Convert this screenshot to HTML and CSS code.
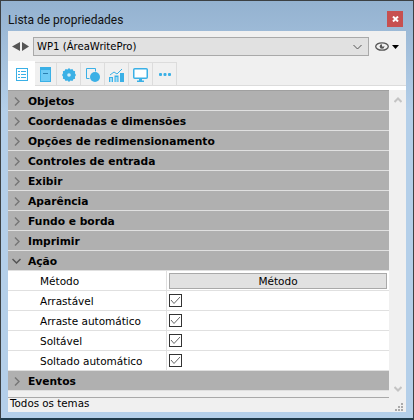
FILE: index.html
```html
<!DOCTYPE html>
<html lang="pt">
<head>
    <meta charset="UTF-8">
    <meta name="viewport" content="width=device-width, initial-scale=1.0">
    <title>Lista de propriedades</title>
    <link rel="stylesheet" href="styles.css">
</head>
<body>
    <div class="window">
        <header class="titlebar">
            <span class="title">Lista de propriedades</span>
            <button class="close">
                <svg width="7" height="6" viewBox="0 0 7 6"><path d="M1 .5l5 5M6 .5l-5 5" stroke="#fff" stroke-width="2"/></svg>
            </button>
        </header>

        <div class="panel">
            <div class="toolbar">
                <div class="arrows">
                    <svg width="8" height="9" viewBox="0 0 8 9"><path d="M8 0v9L0 4.500z" fill="#555"/></svg>
                    <svg width="7" height="9" viewBox="0 0 7 9"><path d="M0 0v9l7-4.500z" fill="#555"/></svg>
                </div>
                <div class="select">
                    <span>WP1 (ÁreaWritePro)</span>
                    <svg width="9" height="6" viewBox="0 0 9 6"><path d="M.5 1l4 4 4-4" fill="none" stroke="#555" stroke-width="1"/></svg>
                </div>
                <div class="eye">
                    <svg width="14" height="9" viewBox="0 0 14 9"><ellipse cx="7" cy="4.500" rx="6.300" ry="3.700" fill="none" stroke="#555" stroke-width="1.300"/><circle cx="7" cy="4.500" r="2.300" fill="#555"/><path d="M7 2h2v2.500H7z" fill="#eee"/></svg>
                    <svg width="7" height="4" viewBox="0 0 7 4"><path d="M0 0h7L3.500 4z" fill="#000"/></svg>
                </div>
            </div>

            <div class="tabs">
                <div class="tab active">
                    <svg width="12" height="13" viewBox="0 0 12 13" fill="none" stroke="#3ab0e6"><rect x=".5" y=".5" width="11" height="12"/><path d="M2 3.500h2M5 3.500h5M2 6.500h2M5 6.500h5M2 9.500h2M5 9.500h5"/></svg>
                </div>
                <div class="tab narrow">
                    <svg width="11" height="15" viewBox="0 0 11 15"><rect width="11" height="15" fill="#3ab0e6"/><rect x="1" y="3" width="9" height="11" fill="#6fcbf5"/><path d="M3 6h5v1H3z" fill="#2a7fb0"/></svg>
                </div>
                <div class="tab">
                    <svg width="14" height="14" viewBox="0 0 14 14"><path d="M7 0l1.500 1.500L10.500 1l.8 1.700 1.800.5-.2 2L14 7l-1.100 1.800.2 2-1.800.5-.8 1.700-2-.5L7 14l-1.500-1.500-2 .5-.8-1.700-1.800-.5.2-2L0 7l1.100-1.800-.2-2 1.800-.5.8-1.700 2 .5z" fill="#3ab0e6"/><circle cx="7" cy="7" r="1.800" fill="#cfeefb"/></svg>
                </div>
                <div class="tab">
                    <svg width="14" height="14" viewBox="0 0 14 14"><path d="M3.500 10.500h-3V.5h9v3" fill="none" stroke="#3ab0e6"/><circle cx="9" cy="9" r="5" fill="#3ab0e6"/></svg>
                </div>
                <div class="tab">
                    <svg width="15" height="14" viewBox="0 0 15 14"><path d="M1 7l4-3 3 2 5-5" fill="none" stroke="#3ab0e6"/><path d="M0 9h4v5H0zM5.500 7.500h4V14h-4zM11 5h4v9h-4z" fill="#3ab0e6"/><path d="M1 10h2v4H1zM6.500 9h2v5h-2z" fill="#9adcf8"/></svg>
                </div>
                <div class="tab">
                    <svg width="15" height="14" viewBox="0 0 15 14"><rect x=".75" y=".75" width="13.500" height="9.500" rx="1" fill="#fff" stroke="#3ab0e6" stroke-width="1.500"/><path d="M6 11h3v1.500h2V14H4v-1.500h2z" fill="#3ab0e6"/></svg>
                </div>
                <div class="tab">
                    <svg width="12" height="3" viewBox="0 0 12 3" fill="#3ab0e6"><rect width="3" height="3" rx="1"/><rect x="4.500" width="3" height="3" rx="1"/><rect x="9" width="3" height="3" rx="1"/></svg>
                </div>
            </div>

            <div class="list-wrap">
                <div class="list">
                    <div class="group"><svg class="chev" width="6" height="9" viewBox="0 0 6 9"><path d="M1 .5l4 4-4 4" fill="none" stroke="#777" stroke-width="1.500"/></svg>Objetos</div>
                    <div class="group"><svg class="chev" width="6" height="9" viewBox="0 0 6 9"><path d="M1 .5l4 4-4 4" fill="none" stroke="#777" stroke-width="1.500"/></svg>Coordenadas e dimensões</div>
                    <div class="group"><svg class="chev" width="6" height="9" viewBox="0 0 6 9"><path d="M1 .5l4 4-4 4" fill="none" stroke="#777" stroke-width="1.500"/></svg>Opções de redimensionamento</div>
                    <div class="group"><svg class="chev" width="6" height="9" viewBox="0 0 6 9"><path d="M1 .5l4 4-4 4" fill="none" stroke="#777" stroke-width="1.500"/></svg>Controles de entrada</div>
                    <div class="group"><svg class="chev" width="6" height="9" viewBox="0 0 6 9"><path d="M1 .5l4 4-4 4" fill="none" stroke="#777" stroke-width="1.500"/></svg>Exibir</div>
                    <div class="group"><svg class="chev" width="6" height="9" viewBox="0 0 6 9"><path d="M1 .5l4 4-4 4" fill="none" stroke="#777" stroke-width="1.500"/></svg>Aparência</div>
                    <div class="group"><svg class="chev" width="6" height="9" viewBox="0 0 6 9"><path d="M1 .5l4 4-4 4" fill="none" stroke="#777" stroke-width="1.500"/></svg>Fundo e borda</div>
                    <div class="group"><svg class="chev" width="6" height="9" viewBox="0 0 6 9"><path d="M1 .5l4 4-4 4" fill="none" stroke="#777" stroke-width="1.500"/></svg>Imprimir</div>
                    <div class="group"><svg class="chev open" width="9" height="6" viewBox="0 0 9 6"><path d="M.5 1l4 4 4-4" fill="none" stroke="#555" stroke-width="1.500"/></svg>Ação</div>
                    <div class="row">
                        <div class="prop">Método</div>
                        <div class="val"><div class="method">Método</div></div>
                    </div>
                    <div class="row">
                        <div class="prop">Arrastável</div>
                        <div class="val"><span class="check"><svg width="11" height="9" viewBox="0 0 11 9"><path d="M1 4l3 3.500L10 1" fill="none" stroke="#666" stroke-width="1"/></svg></span></div>
                    </div>
                    <div class="row">
                        <div class="prop">Arraste automático</div>
                        <div class="val"><span class="check"><svg width="11" height="9" viewBox="0 0 11 9"><path d="M1 4l3 3.500L10 1" fill="none" stroke="#666" stroke-width="1"/></svg></span></div>
                    </div>
                    <div class="row">
                        <div class="prop">Soltável</div>
                        <div class="val"><span class="check"><svg width="11" height="9" viewBox="0 0 11 9"><path d="M1 4l3 3.500L10 1" fill="none" stroke="#666" stroke-width="1"/></svg></span></div>
                    </div>
                    <div class="row">
                        <div class="prop">Soltado automático</div>
                        <div class="val"><span class="check"><svg width="11" height="9" viewBox="0 0 11 9"><path d="M1 4l3 3.500L10 1" fill="none" stroke="#666" stroke-width="1"/></svg></span></div>
                    </div>
                    <div class="group"><svg class="chev" width="6" height="9" viewBox="0 0 6 9"><path d="M1 .5l4 4-4 4" fill="none" stroke="#777" stroke-width="1.500"/></svg>Eventos</div>
                </div>
                <div class="scrollbar">
                    <svg width="8" height="6" viewBox="0 0 8 6"><path d="M.5 5L4 1.500 7.500 5" fill="none" stroke="#c4c4c4" stroke-width="2"/></svg>
                    <svg width="8" height="6" viewBox="0 0 8 6"><path d="M.5 1L4 4.500 7.500 1" fill="none" stroke="#c4c4c4" stroke-width="2"/></svg>
                </div>
            </div>

            <footer class="status">
                <span class="status-text">Todos os temas</span>
                <svg class="grip" width="8" height="8" viewBox="0 0 8 8" fill="#aaa"><path d="M6 0h2v2H6zM3 3h2v2H3zM6 3h2v2H6zM0 6h2v2H0zM3 6h2v2H3zM6 6h2v2H6z"/></svg>
            </footer>
        </div>
    </div>
</body>
</html>
```
FILE: styles.css
```css
* {
    box-sizing: border-box;
}

body {
    margin: 0;
    font-family: "DejaVu Sans", sans-serif;
    font-size: 10.5px;
    color: #000;
}

.window {
    width: 414px;
    height: 420px;
    padding: 0 7px 6px 7px;
    border: 1px solid #3c4043;
    border-bottom: 2px solid #1f3a4a;
    background: linear-gradient(#94b2d0, #b4cfe9 110px);
    display: flex;
    flex-direction: column;
}

.titlebar {
    height: 30px;
    flex: none;
    padding-top: 6px;
    display: flex;
    align-items: center;
    justify-content: space-between;
}

.title {
    margin-top: 1px;
    font-family: Roboto, sans-serif;
    font-size: 12px;
    color: #111;
}

.close {
    width: 16px;
    height: 16px;
    margin-right: 3px;
    padding: 0;
    border: none;
    background-color: #c75050;
    display: flex;
    align-items: center;
    justify-content: center;
}

.panel {
    flex: 1;
    background-color: #f0f0f0;
    display: flex;
    flex-direction: column;
}

.toolbar {
    height: 30px;
    flex: none;
    padding: 6px 6px 5px 4px;
    display: flex;
    align-items: center;
}

.arrows {
    width: 21px;
    display: flex;
    gap: 2px;
}

.select {
    flex: 1;
    height: 19px;
    padding: 0 6px 0 3px;
    border: 1px solid #a9a9a9;
    background-color: #e1e1e1;
    font-size: 10.1px;
    display: flex;
    align-items: center;
    justify-content: space-between;
}

.eye {
    width: 31px;
    padding-left: 6px;
    display: flex;
    align-items: center;
    gap: 3px;
}

.tabs {
    height: 25px;
    flex: none;
    border-bottom: 1px solid #dcdcdc;
    display: flex;
    align-items: flex-end;
}

.tab {
    width: 24px;
    height: 23px;
    padding-top: 1px;
    border-top: 1px solid #dcdcdc;
    border-right: 1px solid #dcdcdc;
    display: flex;
    align-items: center;
    justify-content: center;
}

.tab.narrow {
    width: 22px;
}

.tab.active {
    width: 27px;
    height: 25px;
    margin-bottom: -1px;
    background-color: #fff;
    border: none;
}

.list-wrap {
    flex: 1;
    border-top: 4px solid #fff;
    display: flex;
    flex-direction: column;
    position: relative;
}

.list {
    width: 381px;
    border-top: 1px solid #a0a0a0;
    background-color: #fff;
}

.group {
    height: 20px;
    padding: 1px 0 0 6px;
    border-bottom: 1px solid #e0e0e0;
    background-color: #b0b0b0;
    font-size: 10.7px;
    font-weight: bold;
    display: flex;
    align-items: center;
}

.chev {
    margin-right: 8px;
}

.chev.open {
    margin-left: -2px;
    margin-right: 7px;
}

.row {
    height: 20px;
    border-bottom: 1px solid #e0e0e0;
    display: flex;
}

.prop {
    width: 158px;
    padding-left: 32px;
    line-height: 20px;
}

.val {
    flex: 1;
    padding-left: 2px;
    border-left: 1px solid #e0e0e0;
    display: flex;
    align-items: center;
}

.method {
    width: 218px;
    height: 16px;
    border: 1px solid #a9a9a9;
    background-color: #e1e1e1;
    text-align: center;
    line-height: 14px;
}

.check {
    width: 13px;
    height: 13px;
    border: 1px solid #333;
    display: flex;
    align-items: center;
    justify-content: center;
}

/* sits over the right side of the list */
.scrollbar {
    position: absolute;
    top: 7px;
    right: 0;
    width: 17px;
    height: 295px;
    display: flex;
    flex-direction: column;
    align-items: center;
    justify-content: space-between;
}

.status {
    margin-top: auto;
    height: 15px;
    flex: none;
    display: flex;
}

.status-text {
    width: 381px;
    padding: 0 2px;
    border-top: 1px solid #a9a9a9;
    font-size: 10.3px;
    line-height: 11px;
}

.grip {
    margin: 6px 0 0 6px;
}
```
